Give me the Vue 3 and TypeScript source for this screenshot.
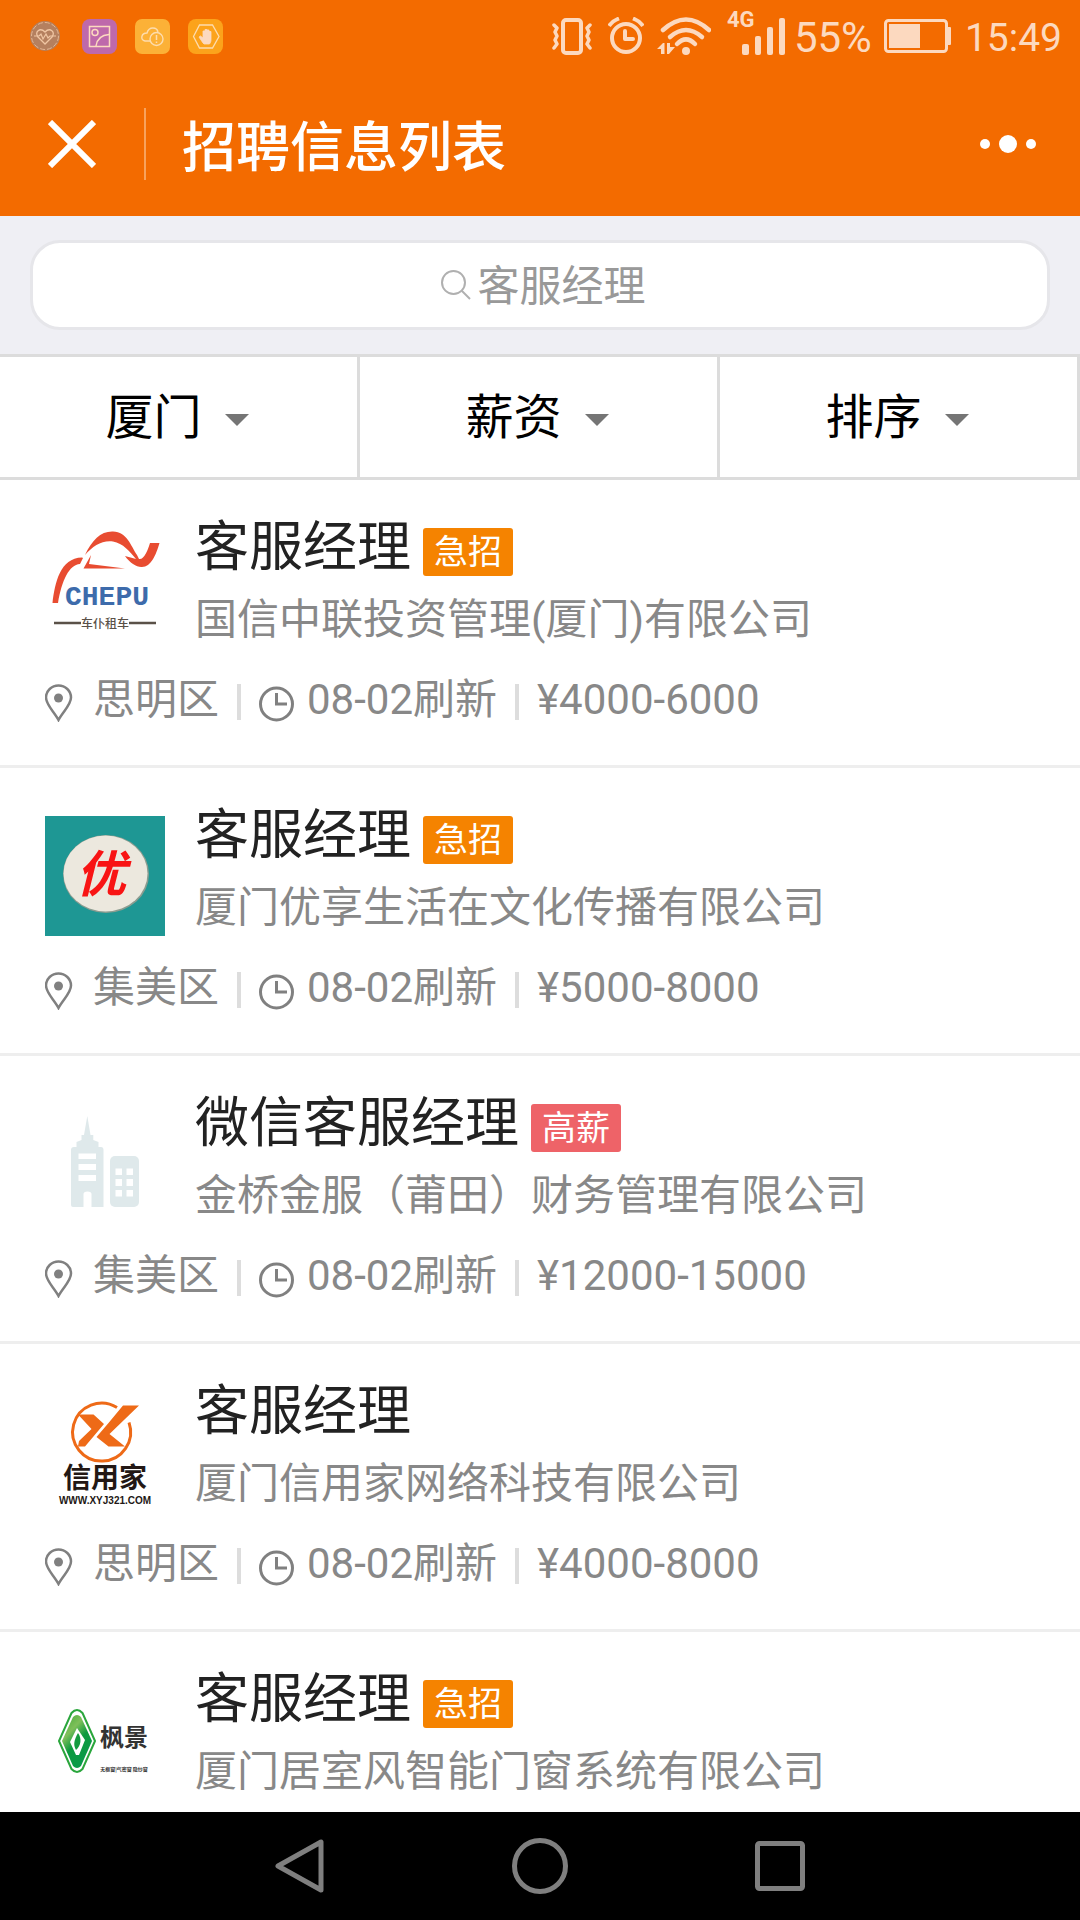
<script setup lang="ts">
import { ref } from 'vue'

type LogoName = 'chepu' | 'you' | 'building' | 'xyj' | 'fengjing'

interface Job {
  id: number
  title: string
  tag?: '急招' | '高薪'
  company: string
  logo: LogoName
  meta?: { district: string; refreshed: string; salary: string }
}

const keyword = ref('')

const filters: string[] = ['厦门', '薪资', '排序']

const jobs: Job[] = [
  {
    id: 1,
    title: '客服经理',
    tag: '急招',
    company: '国信中联投资管理(厦门)有限公司',
    logo: 'chepu',
    meta: { district: '思明区', refreshed: '08-02刷新', salary: '¥4000-6000' },
  },
  {
    id: 2,
    title: '客服经理',
    tag: '急招',
    company: '厦门优享生活在文化传播有限公司',
    logo: 'you',
    meta: { district: '集美区', refreshed: '08-02刷新', salary: '¥5000-8000' },
  },
  {
    id: 3,
    title: '微信客服经理',
    tag: '高薪',
    company: '金桥金服（莆田）财务管理有限公司',
    logo: 'building',
    meta: { district: '集美区', refreshed: '08-02刷新', salary: '¥12000-15000' },
  },
  {
    id: 4,
    title: '客服经理',
    company: '厦门信用家网络科技有限公司',
    logo: 'xyj',
    meta: { district: '思明区', refreshed: '08-02刷新', salary: '¥4000-8000' },
  },
  {
    id: 5,
    title: '客服经理',
    tag: '急招',
    company: '厦门居室风智能门窗系统有限公司',
    logo: 'fengjing',
  },
]
</script>

<template>
  <div class="screen">
    <div class="status">
      <div class="status-left">
        <svg class="app-icon" viewBox="0 0 35 35">
          <circle cx="16" cy="17" r="15" fill="#b5805f" />
          <circle cx="16" cy="17" r="13.5" fill="none" stroke="#e3b795" stroke-width="1" stroke-dasharray="5 2" />
          <path d="M16 25 L9 18 C5 13 11 8 16 13 C21 8 27 13 23 18 Z" fill="none" stroke="#f0c6a4" stroke-width="1.3" />
          <path d="M5 17 H10 L12 15 L14 20 L17 15 L19 19 L21 17 H27" fill="none" stroke="#f0c6a4" stroke-width="1.2" />
        </svg>
        <svg class="app-icon" viewBox="0 0 35 35">
          <rect width="35" height="35" rx="8" fill="#be69ab" />
          <rect x="7.500" y="7.500" width="20" height="20" fill="none" stroke="#fcd9bf" stroke-width="1.5" />
          <circle cx="13" cy="13.500" r="3" fill="none" stroke="#fcd9bf" stroke-width="1.5" />
          <path d="M14 27 C15 20 20 16 27 15.500" fill="none" stroke="#fcd9bf" stroke-width="1.5" />
        </svg>
        <svg class="app-icon" viewBox="0 0 35 35">
          <rect width="35" height="35" rx="7" fill="#fcb137" />
          <path d="M15 22 H10 C5 21 6 14 12 14 C14 7 22 8 23 13" fill="none" stroke="#fddcae" stroke-width="1.4" />
          <circle cx="21.500" cy="20" r="6.500" fill="none" stroke="#fddcae" stroke-width="1.4" />
          <path d="M21.500 16 V21 M21.500 22.500 V24" stroke="#fddcae" stroke-width="1.5" />
        </svg>
        <svg class="app-icon" viewBox="0 0 35 35">
          <rect width="35" height="35" rx="8" fill="#fca31b" />
          <path d="M5.500 17.500 L11.500 6 H24.500 L31 17.500 L24.500 29 H11.500 Z" fill="none" stroke="#fddcae" stroke-width="1.3" />
          <path d="M15 24 L11 18 L12.500 17 L15 19 V12 H17 V17 V10.500 H19 V17 V11 H21 V17 V12.500 H23 V19 C23 22 23 23 21.500 25 H16 Z" fill="#fcd9bf" stroke="#fcd9bf" stroke-width="0.800" stroke-linejoin="round" />
        </svg>
      </div>

      <div class="status-right">
        <svg class="ic-vibrate" width="40" height="38" viewBox="0 0 40 38" fill="none" stroke="#fcd9bf" stroke-linejoin="round" stroke-linecap="round">
          <rect x="11" y="3" width="18" height="33" rx="3" stroke-width="4" />
          <path d="M2 8 L5 11 L3 15 L5 19 L3 23 L5 27 L2 31 M38 8 L35 11 L37 15 L35 19 L37 23 L35 27 L38 31" stroke-width="3.500" />
        </svg>
        <svg class="ic-alarm" width="36" height="38" viewBox="0 0 36 38" fill="none" stroke="#fcd9bf">
          <circle cx="18" cy="21" r="14" stroke-width="4" />
          <path d="M17 14 V22 H25" stroke-width="4" stroke-linecap="round" stroke-linejoin="round" />
          <path d="M1 9 C3 6 7 3 11 1.500 M35 9 C33 6 29 3 25 1.500" stroke-width="4" />
        </svg>
        <svg class="ic-wifi" width="54" height="38" viewBox="0 0 54 38" fill="none" stroke="#fcd9bf" stroke-linecap="round">
          <path d="M6 13 Q29 -8 52 13" stroke-width="4.500" />
          <path d="M13 20 Q29 6 45 20" stroke-width="4.500" />
          <path d="M20 27 Q29 18 38 27" stroke-width="4.500" />
          <circle cx="29" cy="34" r="4" fill="#fcd9bf" stroke="none" />
          <path d="M0 32 L6 26 H7.500 V37 H4 V32 Z M10 26 H13 V30 H18 L12 37 H10 Z" fill="#fcd9bf" stroke="none" />
        </svg>
        <svg class="ic-signal" width="58" height="58" viewBox="0 0 58 58" fill="#fcd9bf">
          <text x="0" y="20" class="net-text">4G</text>
          <rect x="15" y="37" width="7" height="11" rx="2" />
          <rect x="28" y="29" width="6" height="19" rx="2" />
          <rect x="40" y="20" width="6" height="28" rx="2" />
          <rect x="52" y="11" width="6" height="37" rx="2" />
        </svg>
        <span class="percent">55%</span>
        <svg class="ic-battery" width="67" height="34" viewBox="0 0 67 34">
          <rect x="1.500" y="1.500" width="61" height="31" rx="3" fill="none" stroke="#fcd9bf" stroke-width="3" />
          <rect x="5" y="5" width="31" height="24" fill="#fcd9bf" />
          <rect x="63" y="8" width="4" height="18" rx="1" fill="#fcd9bf" />
        </svg>
        <time class="clock">15:49</time>
      </div>
    </div>

    <header class="topbar">
      <button class="close" type="button" aria-label="关闭">
        <svg width="48" height="48" viewBox="0 0 48 48">
          <path d="M2 2 L46 46 M46 2 L2 46" stroke="#fff" stroke-width="6" />
        </svg>
      </button>
      <h1>招聘信息列表</h1>
      <button class="more" type="button" aria-label="更多">
        <svg width="56" height="18" viewBox="0 0 56 18" fill="#fff">
          <circle cx="5" cy="9" r="5" />
          <circle cx="28" cy="9" r="9" />
          <circle cx="51" cy="9" r="5" />
        </svg>
      </button>
    </header>

    <form class="search" role="search" @submit.prevent>
      <label class="search-box">
        <svg width="30" height="30" viewBox="0 0 30 30" fill="none" stroke="#b0b0b0" stroke-width="2">
          <circle cx="12.500" cy="12.500" r="11.500" />
          <path d="M20.500 20.500 L29 29" />
        </svg>
        <input v-model="keyword" type="text" placeholder="客服经理" aria-label="搜索" />
      </label>
    </form>

    <div class="filters">
      <label v-for="name in filters" :key="name" class="filter">
        <select :aria-label="name">
          <option>{{ name }}</option>
        </select>
        <svg width="24" height="12" viewBox="0 0 24 12"><path d="M0 0 H24 L12 12 Z" fill="#757575" /></svg>
      </label>
    </div>

    <ul class="list">
      <li v-for="job in jobs" :key="job.id" class="job">
        <div class="head">
          <svg v-if="job.logo === 'chepu'" class="logo" viewBox="0 0 120 120">
            <g fill="#e84c31">
              <path d="M7.500 75 C10 55 15 30 37 29.500 L38 30 L35 36 C24 37 17 52 13 75 Z" />
              <path d="M40 27 C47 12 56 3 68 3.500 C82 4 86 18 92 27 L94 31 C99 32 103 22 105 15 L114.500 15 C111 27 106 39 97 39 C92 39.500 85 35 80 28 L91 31 C85 24 78 15 68 13.500 C57 12 48 18 40 27 Z" />
              <path d="M46 27 L38.500 40.500 L80 40.500 L44 36 Z" />
            </g>
            <text x="20" y="77" class="chepu-en">CHEPU</text>
            <path d="M9 95 H36 M84 95 H111" stroke="#5a5148" stroke-width="2.500" />
            <text x="60" y="100" class="chepu-cn">车仆租车</text>
          </svg>

          <svg v-else-if="job.logo === 'you'" class="logo" viewBox="0 0 120 120">
            <rect width="120" height="120" fill="#1e9794" />
            <ellipse cx="61" cy="58" rx="43" ry="39" fill="#8b9c90" />
            <ellipse cx="60.500" cy="57.500" rx="42" ry="38" fill="#ece8de" />
            <text x="56" y="76" class="you-text">优</text>
          </svg>

          <svg v-else-if="job.logo === 'building'" class="logo" viewBox="0 0 120 120">
            <path d="M26 46 Q26 43 29 43 H31.500 V38 L36.500 36 V31 H39 L42.300 12 L45.500 31 H48.300 V36 L53.500 38 V43 H56 Q58.500 43 58.500 46 V103 H46.500 V90 Q46.500 87.500 42.500 87.500 Q38.500 87.500 38.500 90 V103 H28 Q26 103 26 101 Z" fill="#dfe9eb" />
            <rect x="65" y="52" width="29" height="51" rx="5" fill="#dfe9eb" />
            <path d="M33.500 49.500 H51 V55 H33.500 Z M33.500 60 H51 V66 H33.500 Z M33.500 71 H51 V77 H33.500 Z M70.500 64.500 H77 V71 H70.500 Z M81.500 64.500 H88 V71 H81.500 Z M70.500 75 H77 V82 H70.500 Z M81.500 75 H88 V82 H81.500 Z M70.500 86 H77 V92.500 H70.500 Z M81.500 86 H88 V92.500 H81.500 Z" fill="#fff" />
          </svg>

          <svg v-else-if="job.logo === 'xyj'" class="logo" viewBox="0 0 120 120">
            <path d="M72 15.500 A29 29 0 1 0 84 30.500" fill="none" stroke="#ee6a17" stroke-width="3" />
            <path d="M33 22.500 H48.500 L59 32 L40 54.500 H33 L34 49 L46.500 37 Z M78 13.500 H94 L64.500 42 L80 54.500 H63.500 L51.500 45 L63.500 31 Z" fill="#ee6a17" />
            <text x="60" y="96" class="xyj-cn">信用家</text>
            <text x="60" y="112" class="xyj-url">WWW.XYJ321.COM</text>
          </svg>

          <svg v-else class="logo" viewBox="0 0 120 120">
            <defs>
              <linearGradient id="leaf" x1="0" y1="0" x2="0.600" y2="1">
                <stop offset="0" stop-color="#3aa935" />
                <stop offset="0.350" stop-color="#7fbf5a" />
                <stop offset="0.600" stop-color="#0c9a3e" />
                <stop offset="1" stop-color="#0a9a4a" />
              </linearGradient>
            </defs>
            <path d="M26.500 33 Q32 27 37.500 33 L50 61 L37.500 89 Q32 95 26.500 89 L14 61 Z" fill="#fff" stroke="#2aa63c" stroke-width="2" stroke-linejoin="round" />
            <path d="M28 37 Q32 33 36 37 L47 61 L36 86 Q32 90 28 86 L17 61 Z" fill="url(#leaf)" />
            <path d="M32 48 L40 60 L34 75 H31 L25 62 Z" fill="#fff" />
            <path d="M33 53 C37 58 36 66 31 70 C28 65 29 60 33 53 Z" fill="#139b3f" />
            <text x="79" y="66" class="feng-cn">枫景</text>
            <text x="79" y="91" class="feng-sub">无框窗|气密窗 隐纱窗</text>
          </svg>

          <div class="info">
            <div class="title-row">
              <h2>{{ job.title }}</h2>
              <span v-if="job.tag" class="tag" :class="{ high: job.tag === '高薪' }">{{ job.tag }}</span>
            </div>
            <p class="company">{{ job.company }}</p>
          </div>
        </div>

        <div v-if="job.meta" class="meta">
          <svg class="pin" width="28" height="38" viewBox="0 0 28 38">
            <path d="M13.500 36 C9.500 28 1 21 1 13.500 A12.500 12 0 0 1 26 13.500 C26 21 17.500 28 13.500 36 Z" fill="none" stroke="#808080" stroke-width="2.500" />
            <circle cx="13.500" cy="14" r="4.500" fill="#808080" />
          </svg>
          <span>{{ job.meta.district }}</span>
          <i class="sep"></i>
          <svg class="time-icon" width="36" height="36" viewBox="0 0 36 36" fill="none" stroke="#808080">
            <circle cx="17.500" cy="18" r="16" stroke-width="3" />
            <path d="M17.500 7 V18 H28" stroke-width="3" />
          </svg>
          <span>{{ job.meta.refreshed }}</span>
          <i class="sep"></i>
          <span>{{ job.meta.salary }}</span>
        </div>
      </li>
    </ul>

    <nav class="navbar">
      <button type="button" aria-label="返回">
        <svg width="56" height="56" viewBox="0 0 56 56" fill="none" stroke="#7f7f7f" stroke-width="5" stroke-linejoin="round">
          <path d="M49 4 V52 L6 28 Z" />
        </svg>
      </button>
      <button type="button" aria-label="主页">
        <svg width="56" height="56" viewBox="0 0 56 56" fill="none" stroke="#7f7f7f" stroke-width="5">
          <circle cx="28" cy="28" r="25.500" />
        </svg>
      </button>
      <button type="button" aria-label="最近任务">
        <svg width="56" height="56" viewBox="0 0 56 56" fill="none" stroke="#7f7f7f" stroke-width="5">
          <rect x="5.500" y="5.500" width="45" height="45" rx="2" />
        </svg>
      </button>
    </nav>
  </div>
</template>

<style>
body {
  background: #fff;
}
</style>

<style scoped>
.screen {
  display: flex;
  flex-direction: column;
  height: 100vh;
  background: #fff;
  font-family: Roboto, 'Noto Sans CJK SC', sans-serif;
}

svg {
  display: block;
  flex: none;
}

button {
  display: flex;
  align-items: center;
  justify-content: center;
  padding: 0;
  border: 0;
  background: none;
}

h1,
h2,
p,
ul {
  margin: 0;
  padding: 0;
  font-weight: 400;
}

/* system status bar */
.status {
  display: flex;
  align-items: center;
  justify-content: space-between;
  flex: none;
  height: 72px;
  padding: 0 18px 0 29px;
  background: #f36b00;
  color: #fcd9bf;
}

.status-left {
  display: flex;
  gap: 18px;
}

.app-icon {
  width: 35px;
  height: 35px;
}

.status-right {
  display: flex;
  align-items: center;
  line-height: 48px;
}

.ic-vibrate {
  margin-right: 16px;
}

.ic-alarm {
  margin-right: 13px;
}

.ic-wifi {
  margin-right: 16px;
}

.ic-signal {
  margin-right: 9px;
}

.net-text {
  font-size: 22px;
  font-weight: 700;
}

.percent,
.clock {
  padding-top: 3px;
}

.percent {
  margin-right: 12px;
  font-size: 42px;
}

.ic-battery {
  margin-right: 14px;
}

.clock {
  font-size: 39px;
}

/* page title bar */
.topbar {
  display: flex;
  align-items: center;
  flex: none;
  height: 144px;
  padding: 0 44px 0 0;
  background: #f36b00;
  color: #fff;
}

.close {
  width: 146px;
  height: 72px;
  border-right: 2px solid #f8a25c;
}

h1 {
  flex: 1;
  padding: 9px 0 0 36px;
  font-size: 54px;
  font-weight: 500;
  line-height: 72px;
}

/* search */
.search {
  flex: none;
  padding: 24px 30px;
  background: #efeff4;
}

.search-box {
  display: flex;
  align-items: center;
  justify-content: center;
  gap: 7px;
  height: 84px;
  padding-left: 6px;
  border: 3px solid #e6e6ea;
  border-radius: 30px;
  background: #fff;
}

.search-box input {
  width: 168px;
  height: 60px;
  padding: 2px 0 0;
  border: 0;
  outline: 0;
  background: none;
  color: #999;
  font: inherit;
  font-size: 42px;
}

.search-box input::placeholder {
  color: #999;
  opacity: 1;
}

/* filter tabs */
.filters {
  display: flex;
  flex: none;
  border-top: 3px solid #dcdcdc;
  border-bottom: 3px solid #dcdcdc;
}

.filter {
  display: flex;
  flex: 1;
  align-items: center;
  justify-content: center;
  gap: 22px;
  height: 120px;
  padding-right: 3px;
  border-right: 3px solid #dcdcdc;
}

.filter svg {
  margin-top: 5px;
}

.filter select {
  height: 72px;
  padding: 0;
  border: 0;
  outline: 0;
  appearance: none;
  background: none;
  color: #000;
  font: inherit;
  font-size: 48px;
}

/* job list */
.list {
  flex: 1;
  min-height: 0;
  overflow: hidden;
  list-style: none;
}

.job {
  padding: 38px 45px 43px;
  border-bottom: 3px solid #eee;
}

.job:last-child {
  border-bottom: 0;
}

.head {
  display: flex;
  align-items: flex-end;
  gap: 30px;
}

.logo {
  width: 120px;
  height: 120px;
  margin-bottom: 2px;
}

.title-row {
  display: flex;
  align-items: flex-end;
  gap: 12px;
}

h2 {
  color: #222;
  font-size: 54px;
  line-height: 60px;
}

.tag {
  margin-bottom: 2px;
  padding: 0 11px;
  border-radius: 3px;
  background: #f58300;
  color: #fff;
  font-size: 34px;
  line-height: 48px;
}

.tag.high {
  background: #ee6368;
}

.company {
  margin-top: 12px;
  color: #888;
  font-size: 42px;
  line-height: 60px;
}

.meta {
  display: flex;
  align-items: flex-end;
  margin-top: 28px;
  color: #888;
  font-size: 42px;
  line-height: 44px;
}

.pin {
  margin-right: 20px;
}

.sep {
  width: 4px;
  height: 36px;
  margin: 0 18px 2px;
  background: #ddd;
}

.time-icon {
  margin-right: 12px;
}

/* logo lettering */
.logo text {
  text-anchor: middle;
  font-family: 'Noto Sans CJK SC', sans-serif;
}

.logo .chepu-en {
  fill: #3d6bab;
  font-family: 'Liberation Mono', monospace;
  font-size: 28px;
  font-weight: 700;
  text-anchor: start;
}

.logo .chepu-cn {
  fill: #5a5148;
  font-size: 12px;
  font-weight: 500;
}

.logo .you-text {
  fill: #f81414;
  font-size: 50px;
  font-style: italic;
  font-weight: 700;
}

.logo .xyj-cn {
  fill: #231815;
  font-size: 28px;
  font-weight: 700;
}

.logo .xyj-url {
  fill: #231815;
  font-family: 'Liberation Sans', sans-serif;
  font-size: 10px;
  font-weight: 700;
}

.logo .feng-cn {
  fill: #333;
  font-size: 24px;
  font-weight: 700;
}

.logo .feng-sub {
  fill: #333;
  font-size: 5px;
  font-weight: 700;
}

/* system navigation */
.navbar {
  display: flex;
  align-items: center;
  justify-content: center;
  flex: none;
  gap: 184px;
  height: 108px;
  background: #000;
}
</style>
